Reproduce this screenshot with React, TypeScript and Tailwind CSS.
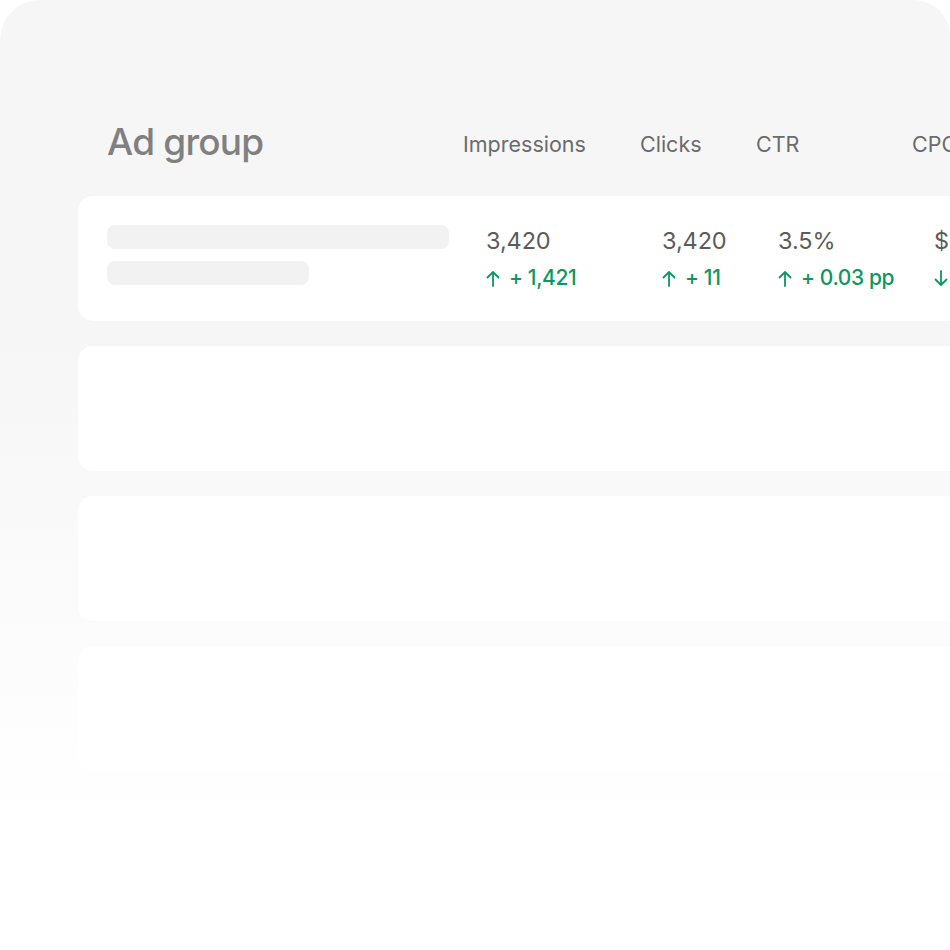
import React from "react";

type Metric = { value: string; delta: string; up: boolean };

const metrics: Metric[] = [
  { value: "3,420", delta: "+ 1,421", up: true },
  { value: "3,420", delta: "+ 11", up: true },
  { value: "3.5%", delta: "+ 0.03 pp", up: true },
  { value: "$0.42", delta: "- 0.02", up: false },
];

const valueCols = "grid grid-cols-[379px_176px_116px_156px_200px]";
const headCols = "grid grid-cols-[355px_177px_116px_156px_200px]";

function Arrow({ up }: { up: boolean }) {
  return (
    <svg width="14" height="17" viewBox="0 0 14 17" fill="none" className="shrink-0">
      {up ? (
        <path d="M7 16V2M1.5 7.5L7 2l5.5 5.5" stroke="currentColor" strokeWidth="1.8" strokeLinecap="round" strokeLinejoin="round" />
      ) : (
        <path d="M7 1v14M1.5 9.5L7 15l5.5-5.5" stroke="currentColor" strokeWidth="1.8" strokeLinecap="round" strokeLinejoin="round" />
      )}
    </svg>
  );
}

function MetricCell({ m }: { m: Metric }) {
  return (
    <div className="flex flex-col gap-[10px] whitespace-nowrap">
      <span className="text-[23.5px] leading-[28px] text-[#5c5c5c] tracking-[-0.1px]">{m.value}</span>
      <span className="flex items-center gap-[9px] text-[21px] leading-[26px] font-medium text-[#0c9860] tracking-[-0.4px]">
        <Arrow up={m.up} />
        {m.delta}
      </span>
    </div>
  );
}

export default function App() {
  return (
    <div className="w-[950px] h-[950px] bg-white" style={{ fontFamily: "Inter, 'Noto Sans', sans-serif" }}>
      <div className="w-[950px] h-[950px] overflow-hidden rounded-tl-[40px] rounded-tr-[36px] bg-[linear-gradient(to_bottom,#f6f6f6_0px,#f6f6f6_330px,#ffffff_820px)] pt-[118px]">
        {/* column headings */}
        <div className={`${headCols} pl-[108px] h-[78px] items-start whitespace-nowrap`}>
          <h1 className="-ml-[1px] text-[37px] leading-[48px] font-medium text-[#808080] tracking-[-0.8px]">Ad group</h1>
          <span className="pt-[12px] text-[21.5px] leading-[28px] text-[#6b6b6b]">Impressions</span>
          <span className="pt-[12px] text-[21.5px] leading-[28px] text-[#6b6b6b]">Clicks</span>
          <span className="pt-[12px] text-[21.5px] leading-[28px] text-[#6b6b6b]">CTR</span>
          <span className="pt-[12px] text-[21.5px] leading-[28px] text-[#6b6b6b]">CPC</span>
        </div>

        <div className="ml-[78px] w-[1000px] flex flex-col gap-[25px]">
          <div className={`${valueCols} h-[125px] rounded-[15px] bg-white pl-[29px] pt-[29px]`}>
            <div className="flex flex-col gap-[12px]">
              <div className="w-[342px] h-[24px] rounded-[8px] bg-[#f2f2f2]" />
              <div className="w-[202px] h-[24px] rounded-[8px] bg-[#f2f2f2]" />
            </div>
            {metrics.map((m, i) => (
              <div key={i} className="pt-[2px]">
                <MetricCell m={m} />
              </div>
            ))}
          </div>
          <div className="h-[125px] rounded-[15px] bg-white" />
          <div className="h-[125px] rounded-[15px] bg-white" />
          <div className="h-[125px] rounded-[15px] bg-white" />
        </div>
      </div>
    </div>
  );
}
